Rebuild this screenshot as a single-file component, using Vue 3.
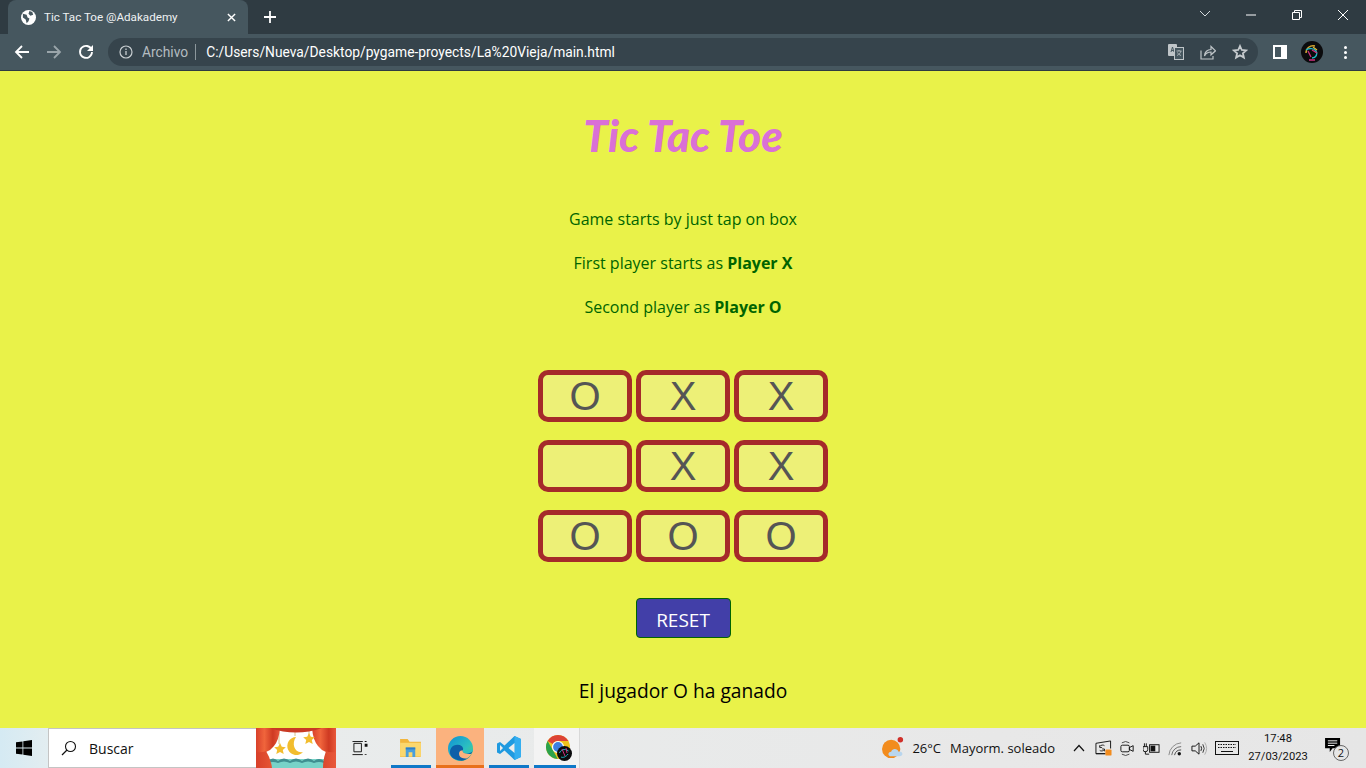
<script setup>
const board = ['O', 'X', 'X', '', 'X', 'X', 'O', 'O', 'O']
</script>

<template>
  <div class="screen">
    <header class="chrome">
      <div class="tabstrip">
        <div class="tab">
          <svg class="globe" viewBox="0 0 16 16"><circle cx="8" cy="8" r="8" fill="#fff"/><path d="M2 4l4 1 1 3 2 1-1 3-2 2-1-4-3-2zM9 1l3 1 1 3-3 1-2-2z" fill="#46575f"/></svg>
          <span class="tab-title">Tic Tac Toe @Adakademy</span>
          <svg class="tab-x" viewBox="0 0 10 10"><path d="M1 1l8 8M9 1l-8 8" stroke="#fff" stroke-width="1.6"/></svg>
        </div>
        <svg class="plus" viewBox="0 0 12 12"><path d="M6 0v12M0 6h12" stroke="#fff" stroke-width="1.8"/></svg>
        <div class="win-ctl">
          <svg class="ctl" viewBox="0 0 46 20"><path d="M18 6l5 5 5-5" fill="none" stroke="#d5dadd" stroke-width="1"/></svg>
          <svg class="ctl" viewBox="0 0 46 20"><path d="M18 10h10" stroke="#fff" stroke-width="1"/></svg>
          <svg class="ctl" viewBox="0 0 46 20"><path d="M18.500 7.500h7v7h-7zM20.500 7V5.500h7v7H26" fill="none" stroke="#fff" stroke-width="1"/></svg>
          <svg class="ctl" viewBox="0 0 46 20"><path d="M18 5l10 10M28 5L18 15" stroke="#fff" stroke-width="1"/></svg>
        </div>
      </div>
      <div class="toolbar">
        <svg class="nav" viewBox="0 0 16 16"><path d="M15 8H2M8 2L2 8l6 6" fill="none" stroke="#fff" stroke-width="1.800"/></svg>
        <svg class="nav" viewBox="0 0 16 16"><path d="M1 8h13M8 2l6 6-6 6" fill="none" stroke="#9aa5aa" stroke-width="1.800"/></svg>
        <svg class="nav" viewBox="0 0 16 16"><path d="M13.500 5.500A6 6 0 1 0 14 8" fill="none" stroke="#fff" stroke-width="1.800"/><path d="M15 1v6H9z" fill="#fff"/></svg>
        <div class="omnibox">
          <svg class="info" viewBox="0 0 14 14"><circle cx="7" cy="7" r="6" fill="none" stroke="#c8ced1" stroke-width="1.200"/><path d="M7 6v4M7 3.500v1.500" stroke="#c8ced1" stroke-width="1.300"/></svg>
          <span class="archivo">Archivo</span>
          <span class="sep"></span>
          <span class="url">C:/Users/Nueva/Desktop/pygame-proyects/La%20Vieja/main.html</span>
          <svg class="omni-icon" viewBox="0 0 16 16"><rect x="0" y="0" width="9" height="12" rx="1" fill="#bfc5c8"/><path d="M3 8l1.500-5L6 8M3.500 6.500h2" fill="none" stroke="#46575f"/><rect x="6.500" y="3.500" width="9" height="12" fill="#46575f" stroke="#bfc5c8"/><path d="M8.500 7h5M11 6v1M13 7c-.5 2-2 3.500-4 4.500M9.500 8.500c.5 1.200 2 2.500 3.500 3" fill="none" stroke="#bfc5c8" stroke-width=".8"/></svg>
          <svg class="omni-icon" viewBox="0 0 16 16"><path d="M1 6.500V15h12v-3" fill="none" stroke="#bfc5c8" stroke-width="1.200"/><path d="M4.500 12c0-4 3-6.500 6.500-6.500V2.500l4.500 4.300L11 10.800V8c-3 0-5 1-6.500 4z" fill="none" stroke="#bfc5c8" stroke-width="1.200"/></svg>
          <svg class="omni-icon last" viewBox="0 0 16 16"><path d="M8 2l1.800 4 4.400.4-3.300 2.900 1 4.300L8 11.300l-3.900 2.300 1-4.300-3.300-2.900L6.200 6z" fill="none" stroke="#c6cbce" stroke-width="1.800"/></svg>
        </div>
        <svg class="side" viewBox="0 0 14 14"><path d="M0 0h14v14H0zM2 2v10h6V2z" fill="#fff" fill-rule="evenodd"/></svg>
        <svg class="avatar" viewBox="0 0 22 22"><circle cx="11" cy="11" r="11" fill="#0b0b0d"/><path d="M5 12c0-5 4-8 9-7" fill="none" stroke="#d6a531" stroke-width="1.500"/><path d="M5 9c3-2 8-2 10 1s0 7-4 7" fill="none" stroke="#1fb7c4" stroke-width="1.500"/><path d="M7 10l3 6M11 9l5 3M8 19h6" stroke="#d0307f" stroke-width="1.300"/><path d="M12 6l4 3" stroke="#e0b93a" stroke-width="1.200"/></svg>
        <div class="dots"><i></i><i></i><i></i></div>
      </div>
    </header>

    <main class="page">
      <h1>Tic Tac Toe</h1>
      <p>Game starts by just tap on box</p>
      <p>First player starts as <b>Player X</b></p>
      <p>Second player as <b>Player O</b></p>
      <div class="board">
        <button v-for="(cell, i) in board" :key="i" class="cell">{{ cell }}</button>
      </div>
      <button class="reset">RESET</button>
      <div class="result">El jugador O ha ganado</div>
    </main>

    <footer class="taskbar">
      <div class="start">
        <svg viewBox="0 0 16 16"><path d="M0 2.300L6.500 1.400v6.200H0zM7.300 1.300L16 0v7.600H7.300zM0 8.400h6.500v6.200L0 13.700zM7.300 8.400H16V16l-8.700-1.300z" fill="#000"/></svg>
      </div>
      <div class="search">
        <svg viewBox="0 0 16 16"><circle cx="9.500" cy="6.500" r="5" fill="none" stroke="#111" stroke-width="1.100"/><path d="M6 10l-5 5" stroke="#111" stroke-width="1.300"/></svg>
        <span>Buscar</span>
      </div>
      <div class="promo">
        <svg viewBox="0 0 80 40" preserveAspectRatio="none">
          <defs>
            <linearGradient id="drape" x1="0" x2="1" y1="0" y2="0">
              <stop offset="0" stop-color="#d8402a"/>
              <stop offset=".35" stop-color="#f0653c"/>
              <stop offset=".7" stop-color="#cf3a22"/>
              <stop offset="1" stop-color="#e9583a"/>
            </linearGradient>
          </defs>
          <rect width="80" height="40" fill="#fff"/>
          <rect y="31" width="80" height="9" fill="#78d3c8"/>
          <path d="M12 33q5-5 10 0 6-5 12 0 6-5 12 0 6-5 12 0 5-4 10 0v2q-5-2-10 0-6-3-12 0-6-3-12 0-6-3-12 0-5-2-10 0z" fill="#3f8f90"/>
          <path d="M23 0v16M39 0v8M53 0v8" stroke="#d9c38a" stroke-width="1"/>
          <path d="M0 0h24q-1 12-6 18-3 4-8 6-5 2-10 1z" fill="url(#drape)"/>
          <path d="M80 0H56q1 12 6 18 3 4 8 6 5 2 10 1z" fill="url(#drape)"/>
          <path d="M0 24q6 1 10-1 5 8 6 17H0zM80 24q-6 1-10-1-3 8-3 17h13z" fill="url(#drape)"/>
          <path d="M14 0q26 9 52 0z" fill="#c93a24"/>
          <path d="M40 9a9 9 0 1 0 7 15c-8 2-12-8-7-15z" fill="#f2bd2e"/>
          <path d="M24 15l1.800 3.800 4 .4-3 2.700.9 4L24 24l-3.700 1.900.9-4-3-2.700 4-.4zM53 5l1.800 3.800 4 .4-3 2.700.9 4-3.700-1.900-3.700 1.900.9-4-3-2.700 4-.4z" fill="#f2bd2e"/>
        </svg>
      </div>
      <div class="task-app taskview">
        <svg viewBox="0 0 16 16"><path d="M0 .5h11M0 14.500h11M1.500 2.500h8v9h-8z" fill="none" stroke="#111" stroke-width="1"/><path d="M13 0h2v1h-2zM13 3h3v3h-3zM13 14h2v1h-2z" fill="#111"/></svg>
      </div>
      <div class="task-app running folder">
        <svg viewBox="0 0 22 19"><path d="M0 0h8l2 3h12v15a1 1 0 0 1-1 1H0z" fill="#f2b63c"/><path d="M0 4h22v14.500H0z" fill="#fbd76d"/><path d="M6 9h10v10h-3v-5H9v5H6z" fill="#4a9fdc"/><path d="M6 9h10v2H6z" fill="#2f7fc4"/></svg>
      </div>
      <div class="task-app running active edge">
        <svg viewBox="0 0 24 24">
          <defs>
            <linearGradient id="edgeTop" x1="0" y1="0" x2="1" y2="1">
              <stop offset="0" stop-color="#0f8fd6"/>
              <stop offset=".6" stop-color="#2cc0c0"/>
              <stop offset="1" stop-color="#62d05a"/>
            </linearGradient>
          </defs>
          <circle cx="12" cy="12" r="12" fill="url(#edgeTop)"/>
          <path d="M24 12.500c0 2.500-3 4-6 4s-4-1-4-2.500c1-1 1-3-1-4.500-3-2-8-1-10 2-3 5 0 11 8 12 6 1 11-3 13-11z" fill="#0d5fa8"/>
          <path d="M13 10c2 1 2 3 1 4 0 2 1 3 4 3 2 0 5-1 6-3v-2c-1 2-3 1-6 1-2 0-4-2-5-3z" fill="#2cc0c0"/>
          <path d="M14 14c-3 0-4 2-3 5 1 2 4 3 7 2.500 2-1 4-3 5-5-1 1-3 1-5 .5-3 0-4-1.500-4-3z" fill="#fbb27e"/>
        </svg>
      </div>
      <div class="task-app running vscode">
        <svg viewBox="0 0 24 24"><path d="M17.500 0L24 3v18l-6.500 3-10-9.500-4.500 3.500-3-1.500V7.500L3 6l4.500 3.500z" fill="#1f9ae0"/><path d="M17.500 0L24 3v18l-6.500 3z" fill="#34aef0"/><path d="M17.500 7l-6 5 6 5z" fill="#ededed"/><path d="M3 9l3 3-3 3z" fill="#ededed"/></svg>
      </div>
      <div class="task-app running chrome-app">
        <svg viewBox="0 0 26 26"><circle cx="12" cy="12" r="12" fill="#eec21d"/><path d="M12 0a12 12 0 0 1 10.400 6H12a6 6 0 0 0-5.200 3L1.600 6A12 12 0 0 1 12 0z" fill="#dd4335"/><path d="M1.600 6l5.200 9 5 9A12 12 0 0 1 1.600 6z" fill="#2ba24c"/><circle cx="12" cy="12" r="5.500" fill="#3e7fe0" stroke="#fff" stroke-width="1.200"/><circle cx="18.500" cy="18.500" r="7.500" fill="#0b0b0d"/><path d="M13.500 18c1-3 5-5 9-2M15 22c2 1 5 0 7-3" fill="none" stroke="#1fb7c4"/><path d="M16 14l3 7M20 13l1 5" stroke="#d0307f"/></svg>
      </div>
      <div class="tray">
        <svg class="weather" viewBox="0 0 24 24"><circle cx="10" cy="13" r="10" fill="#f28c1e"/><path d="M10 21c-4 0-4-5 0-5 1-4 7-4 8 0 5-1 6 5 1 5z" fill="#b9d6ee"/><circle cx="20" cy="3" r="3" fill="#d0302a"/></svg>
        <span class="temp">26°C</span>
        <span class="cond">Mayorm. soleado</span>
        <svg class="chev" viewBox="0 0 12 8"><path d="M1 7l5-5.500L11 7" fill="none" stroke="#111" stroke-width="1.200"/></svg>
        <svg class="t-icon" viewBox="0 0 18 18"><path d="M1 3.500L16.500 1v8M11 14.500H1z" fill="none" stroke="#111"/><path d="M1 3.500v11" stroke="#111"/><path d="M5 7c1-2 4-2 5-1M5 5.500V8h2.500M10 10c-1 2-4 2-5 1M10 12V9.500H7.500" fill="none" stroke="#111" stroke-width=".9"/><rect x="11" y="10" width="6.500" height="6.500" rx="1" fill="#f28c1e"/></svg>
        <svg class="t-icon" viewBox="0 0 18 18"><path d="M3 3a7 7 0 0 1 8 0M3 15a7 7 0 0 0 8 0" fill="none" stroke="#444"/><rect x="2" y="5.500" width="9" height="7" rx="1.500" fill="none" stroke="#111"/><path d="M11 8l4-2v6l-4-2z" fill="none" stroke="#111"/></svg>
        <svg class="t-icon" viewBox="0 0 18 18"><path d="M0 7h5v3a2.500 2.500 0 0 1-5 0zM1.500 3.500V7M3.500 3.500V7M2.500 12v3h4" fill="none" stroke="#111" stroke-width="1"/><rect x="7" y="5" width="10" height="8" fill="none" stroke="#111"/><rect x="8" y="6" width="5" height="6" fill="#111"/></svg>
        <svg class="t-icon" viewBox="0 0 18 18"><path d="M2 16A14 14 0 0 1 15 3" fill="none" stroke="#888"/><path d="M5 16a10 10 0 0 1 10-9" fill="none" stroke="#666"/><path d="M8 16a7 7 0 0 1 7-5.500" fill="none" stroke="#444"/><circle cx="13" cy="14.500" r="1.800" fill="#111"/></svg>
        <svg class="t-icon" viewBox="0 0 18 18"><path d="M1 6.500h3.500l4-3.500v12l-4-3.500H1z" fill="none" stroke="#111"/><path d="M10.500 6.500q1.500 2.500 0 5" fill="none" stroke="#111"/><path d="M12.500 4.500q3 4.500 0 9" fill="none" stroke="#333"/><path d="M14.500 2.500q4 6.500 0 13" fill="none" stroke="#aaa"/></svg>
        <svg class="keyboard" viewBox="0 0 24 14"><rect x=".5" y=".5" width="23" height="13" fill="none" stroke="#111"/><path d="M3 3.500h18M3 6.500h18" stroke="#111" stroke-dasharray="1.500 1"/><path d="M6 10.500h12" stroke="#111"/></svg>
        <div class="clock"><span>17:48</span><span>27/03/2023</span></div>
        <div class="notif">
          <svg viewBox="0 0 18 16"><path d="M0 0h16v11H8l-3 4v-4H0z" fill="#000"/><path d="M3 3h10M3 5.500h10M3 8h7" stroke="#fff"/></svg>
          <span>2</span>
        </div>
      </div>
    </footer>
  </div>
</template>

<style>
html, body { margin: 0; overflow: hidden; }
</style>

<style scoped>
.screen {
  width: 1366px;
  height: 768px;
  display: flex;
  flex-direction: column;
  font-family: "Open Sans", "Noto Sans", sans-serif;
  overflow: hidden;
}
.chrome { height: 71px; flex: none; }
.tabstrip {
  height: 34px;
  background: #2f3b42;
  display: flex;
  align-items: flex-end;
  padding-left: 8px;
}
.tab {
  width: 240px;
  height: 34px;
  box-sizing: border-box;
  background: #46575f;
  border-radius: 8px 8px 0 0;
  display: flex;
  align-items: center;
  padding: 0 12px 0 13px;
  color: #fff;
}
.globe { width: 15px; height: 15px; }
.tab-title { font: 11.65px "Roboto", sans-serif; margin-left: 8px; flex: 1; color: #eef1f2; }
.tab-x { width: 9px; height: 9px; }
.plus { width: 12px; height: 12px; margin: 0 0 11px 16px; }
.win-ctl { margin-left: auto; display: flex; align-self: flex-start; padding-top: 5px; }
.ctl { width: 46px; height: 20px; }
.toolbar {
  height: 36px;
  background: #46575f;
  border-bottom: 1px solid #2f3b42;
  display: flex;
  align-items: center;
  padding-left: 14px;
}
.nav { width: 16px; height: 16px; margin-right: 16px; }
.omnibox {
  width: 1150px;
  height: 28px;
  margin-left: -2px;
  background: #36444c;
  border-radius: 14px;
  display: flex;
  align-items: center;
  padding-left: 11px;
  box-sizing: border-box;
}
.info { width: 14px; height: 14px; }
.archivo { font: 13.8px "Roboto", sans-serif; color: #b4bcc0; margin-left: 9px; }
.sep { width: 1px; height: 16px; background: #8c979c; margin: 0 10px 0 7px; }
.url { font: 13.8px "Roboto", sans-serif; color: #fff; flex: 1; }
.omni-icon { width: 16px; height: 16px; margin-right: 16px; }
.omni-icon.last { margin-right: 10px; }
.side { width: 14px; height: 14px; margin-left: 15px; }
.avatar { width: 22px; height: 22px; margin-left: 14px; }
.dots { margin-left: 21px; display: flex; flex-direction: column; gap: 2px; }
.dots i { width: 3px; height: 3px; background: #fff; border-radius: 50%; display: block; }

.page {
  flex: 1;
  background: #e9f249;
  display: flex;
  flex-direction: column;
  align-items: center;
  color: #006400;
  font-size: 16px;
}
h1 {
  margin: 36px 0 45px;
  font: italic 900 44px/56px "Lato", sans-serif;
  color: #da70d6;
}
p { margin: 0 0 22px; line-height: 22px; }
p b { font-weight: 700; }
.board {
  display: grid;
  grid-template-columns: repeat(3, 94px);
  grid-auto-rows: 52px;
  column-gap: 4px;
  row-gap: 18px;
  margin-top: 30px;
}
.cell {
  box-sizing: border-box;
  border: 5px solid #a52a2a;
  border-radius: 10px;
  background: #edf077;
  color: #555;
  font: 40px/1 "Liberation Sans", sans-serif;
  padding: 0;
}
.reset {
  margin-top: 36px;
  width: 95px;
  height: 40px;
  background: #423fa8;
  border: 1px solid #006400;
  border-radius: 4px;
  color: #fff;
  font: 19px "Open Sans", sans-serif;
  padding: 3px 0 0;
}
.result { margin-top: 39px; font-size: 19.2px; line-height: 27px; color: #000; }

.taskbar {
  height: 40px;
  flex: none;
  display: flex;
  align-items: stretch;
  background: linear-gradient(90deg, #d5eaf3 0, #e6eef0 60px, #e9ecec 300px, #e8e8e8 1000px, #e6e6e6 100%);
  color: #111;
  font-family: "Open Sans", sans-serif;
}
.start { width: 48px; display: flex; align-items: center; justify-content: center; }
.start svg { width: 16px; height: 16px; }
.search {
  width: 208px;
  background: #fff;
  border: 1px solid #c4c4c4;
  border-width: 1px 0 1px 1px;
  box-sizing: border-box;
  display: flex;
  align-items: center;
  padding-left: 12px;
  font-size: 14px;
}
.search svg { width: 16px; height: 16px; margin-right: 12px; }
.promo { width: 80px; }
.promo svg { width: 80px; height: 40px; display: block; }
.task-app {
  position: relative;
  width: 48px;
  box-sizing: border-box;
  display: flex;
  align-items: center;
  justify-content: center;
}
.taskview { width: 50px; padding-right: 2px; }
.taskview svg { width: 16px; height: 15px; }
.running::after {
  content: "";
  position: absolute;
  left: 0;
  right: 0;
  bottom: 0;
  height: 3px;
  background: #0f78c8;
}
.folder { width: 50px; }
.folder::after { left: 5px; right: 5px; }
.folder svg { width: 21px; height: 18px; margin-right: 2px; }
.edge { background: #fbb27e; }
.edge::after { background: #e8701c; }
.edge svg { width: 25px; height: 25px; }
.vscode { width: 50px; }
.vscode::after { left: 5px; right: 5px; }
.vscode svg { width: 24px; height: 24px; }
.chrome-app { width: 46px; background: #f3f3f3; border-right: 1px solid #d8d8d8; }
.chrome-app::after { right: 3px; }
.chrome-app svg { width: 26px; height: 26px; margin-left: 5px; }
.tray { margin-left: auto; display: flex; align-items: center; padding-right: 17px; font-size: 13px; }
.weather { width: 22px; height: 22px; margin-right: 8px; }
.temp { margin-right: 9px; }
.cond { margin-right: 18px; }
.chev { width: 12px; height: 8px; margin-right: 10px; }
.t-icon { width: 17px; height: 17px; margin-right: 7px; }
.keyboard { width: 24px; height: 14px; margin-right: 6px; }
.clock { display: flex; flex-direction: column; align-items: center; width: 66px; font: 11.2px/18px "Roboto", sans-serif; }
.notif { position: relative; margin-left: 14px; width: 24px; height: 24px; }
.notif svg { width: 17px; height: 15px; position: absolute; left: 0; top: 2px; }
.notif span {
  position: absolute;
  left: 8px;
  top: 9px;
  width: 14px;
  height: 14px;
  border: 1px solid #666;
  border-radius: 50%;
  background: #e6e6e6;
  font-size: 11px;
  line-height: 14px;
  text-align: center;
}
</style>
